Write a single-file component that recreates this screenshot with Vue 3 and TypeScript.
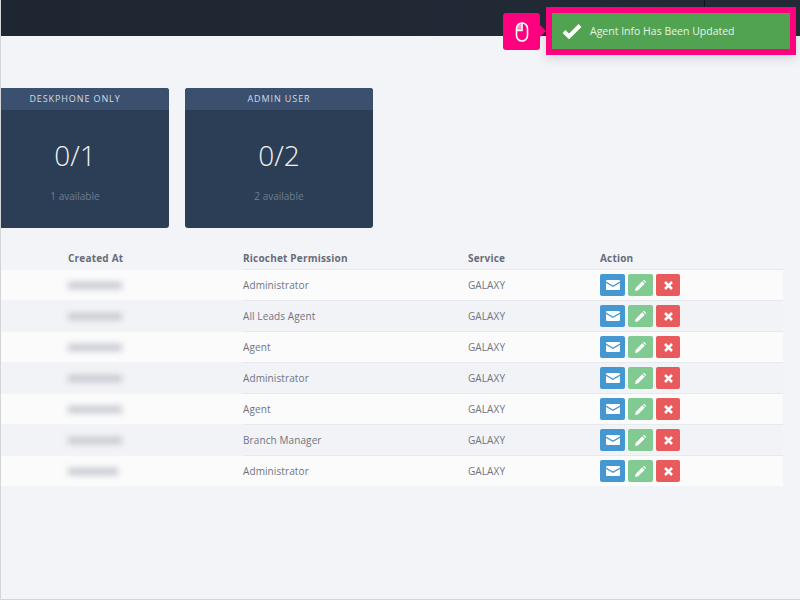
<template>
  <div class="page">
    <header class="topbar"><span class="topbar-rule"></span></header>

    <section class="cards">
      <article v-for="card in cards" :key="card.title" class="card">
        <h2 class="card-title">{{ card.title }}</h2>
        <div class="card-body">
          <div class="card-count">{{ card.count }}</div>
          <div class="card-note">{{ card.note }}</div>
        </div>
      </article>
    </section>

    <table class="agents">
      <colgroup>
        <col class="col-created" />
        <col class="col-permission" />
        <col class="col-service" />
        <col class="col-action" />
      </colgroup>
      <thead>
        <tr>
          <th class="created">Created At</th>
          <th>Ricochet Permission</th>
          <th>Service</th>
          <th>Action</th>
        </tr>
      </thead>
      <tbody>
        <tr v-for="(row, index) in rows" :key="index">
          <td class="created">
            <span class="smudge-bg"></span>
            <span class="smudge" :style="{ width: row.blur + 'px' }"></span>
          </td>
          <td>{{ row.permission }}</td>
          <td>GALAXY</td>
          <td>
            <div class="actions">
              <button class="act act-mail" type="button" aria-label="Email">
                <svg width="14" height="10" viewBox="0 0 14 10">
                  <path fill="#fff" d="M1 0h12a1 1 0 0 1 1 1v.6L7 5.6 0 1.6V1a1 1 0 0 1 1-1zM0 3l7 4 7-4v6a1 1 0 0 1-1 1H1a1 1 0 0 1-1-1z" />
                </svg>
              </button>
              <button class="act act-edit" type="button" aria-label="Edit">
                <svg width="11" height="11" viewBox="0 0 11 11">
                  <path fill="#fff" d="M0 11l.7-3.1L7.3 1.3l2.4 2.4-6.6 6.6zM8 .6l.4-.4a.8.8 0 0 1 1.1 0l1.3 1.3a.8.8 0 0 1 0 1.1l-.4.4z" />
                </svg>
              </button>
              <button class="act act-del" type="button" aria-label="Delete">
                <svg width="9" height="9" viewBox="0 0 9 9">
                  <path stroke="#fff" stroke-width="2.5" d="M1 1l7 7M8 1l-7 7" />
                </svg>
              </button>
            </div>
          </td>
        </tr>
      </tbody>
    </table>

    <div class="mouse-badge">
      <svg width="14" height="20" viewBox="0 0 14 20" fill="none" stroke="#fff" stroke-width="1.6">
        <rect x="1.5" y="1" width="11" height="18" rx="5.5" />
        <path d="M7 1v7.5H1.5" />
        <path fill="#fff" stroke="none" d="M1.5 8.5V6.5a5.5 5.5 0 0 1 5.5-5.5v7.5z" opacity=".55" />
      </svg>
    </div>

    <div class="toast-frame">
      <div class="toast">
        <svg class="toast-check" width="20" height="16" viewBox="0 0 20 16">
          <path fill="none" stroke="#fff" stroke-width="4" d="M2 8.5l5 5L18 2.5" />
        </svg>
        <span>Agent Info Has Been Updated</span>
      </div>
    </div>
  </div>
</template>

<script setup lang="ts">
interface Card {
  title: string
  count: string
  note: string
}

interface Row {
  permission: string
  blur: number
}

const cards: Card[] = [
  { title: 'DESKPHONE ONLY', count: '0/1', note: '1 available' },
  { title: 'ADMIN USER', count: '0/2', note: '2 available' },
]

const rows: Row[] = [
  { permission: 'Administrator', blur: 54 },
  { permission: 'All Leads Agent', blur: 54 },
  { permission: 'Agent', blur: 54 },
  { permission: 'Administrator', blur: 54 },
  { permission: 'Agent', blur: 54 },
  { permission: 'Branch Manager', blur: 54 },
  { permission: 'Administrator', blur: 50 },
]
</script>

<style>
html,
body {
  margin: 0;
  background: #f3f4f7;
}
</style>

<style scoped>
.page {
  position: relative;
  box-sizing: border-box;
  width: 800px;
  height: 600px;
  overflow: hidden;
  background: #f3f4f7;
  border-left: 1px solid #d4d5d8;
  border-bottom: 1px solid #d4d5d8;
  font-family: "Open Sans", "Liberation Sans", sans-serif;
  color: #70747f;
}

.topbar {
  position: relative;
  height: 36px;
  margin-left: -1px;
  background: linear-gradient(90deg, #1e2631, #232b38);
}

.topbar-rule {
  position: absolute;
  top: 0;
  left: 214px;
  left: 704px;
  width: 1px;
  height: 8px;
  background: #10151c;
}

.cards {
  display: flex;
  gap: 16px;
  margin: 52px 0 0 -20px;
}

.card {
  width: 188px;
  height: 140px;
  border-radius: 3px;
  overflow: hidden;
  background: #2c3e55;
  text-align: center;
}

.card-title {
  margin: 0;
  height: 22px;
  background: #3a506e;
  color: #d5dbe4;
  font-size: 9px;
  font-weight: 400;
  line-height: 22px;
  letter-spacing: 0.9px;
}

.card-body {
  padding-top: 26px;
}

.card-count {
  color: #f1f3f6;
  font-size: 28px;
  font-weight: 300;
  line-height: 38px;
}

.card-note {
  margin-top: 15px;
  color: #6f7d8f;
  font-size: 10px;
  line-height: 14px;
}

.agents {
  width: 782px;
  margin-top: 19px;
  border-collapse: collapse;
  table-layout: fixed;
  font-size: 10px;
}

.col-created {
  width: 242px;
}

.col-permission {
  width: 225px;
}

.col-service {
  width: 132px;
}

th {
  height: 22px;
  padding: 0;
  text-align: left;
  font-size: 10px;
  font-weight: 700;
  letter-spacing: 0.2px;
  color: #686c78;
}

th.created,
td.created {
  padding-left: 67px;
}

td {
  position: relative;
  height: 30px;
  padding: 0;
  border-top: 1px solid #e6e9ee;
  letter-spacing: 0.1px;
}

tbody tr:nth-child(odd) {
  background: #fbfbfc;
}

tbody tr:nth-child(even) {
  background: #f2f3f6;
}

.smudge {
  position: relative;
  display: block;
  height: 7px;
  background: #c6c8cf;
  filter: blur(3px);
}

.smudge-bg {
  position: absolute;
  top: 0;
  bottom: 0;
  left: 0;
  width: 146px;
  background: inherit;
}

tbody tr:nth-child(even) .smudge-bg {
  background: #f2f3f6;
}

td.created {
  border-top-color: transparent;
}

.actions {
  display: flex;
  gap: 3px;
}

.act {
  display: flex;
  align-items: center;
  justify-content: center;
  height: 22px;
  padding: 0;
  border: 0;
  border-radius: 2px;
}

.act-mail {
  width: 25px;
  background: #4597d2;
}

.act-edit {
  width: 25px;
  background: #81cb92;
}

.act-del {
  width: 24px;
  background: #e85a5c;
}

.mouse-badge {
  position: absolute;
  top: 13px;
  left: 502px;
  display: flex;
  align-items: center;
  justify-content: center;
  width: 37px;
  height: 37px;
  border-radius: 3px;
  background: #ff007f;
}

.mouse-badge::after {
  content: "";
  position: absolute;
  top: 12px;
  left: 37px;
  border-top: 6px solid transparent;
  border-bottom: 6px solid transparent;
  border-left: 6px solid #ff007f;
}

.toast-frame {
  position: absolute;
  top: 7px;
  left: 545px;
  box-sizing: border-box;
  width: 250px;
  height: 48px;
  border: 6px solid #ff007f;
  box-shadow: 0 3px 10px rgba(40, 45, 60, 0.16);
}

.toast {
  display: flex;
  align-items: center;
  height: 100%;
  padding-left: 10px;
  background: #51a351;
  color: #e8f3e8;
  font-size: 10.5px;
}

.toast-check {
  margin-right: 8px;
}
</style>
